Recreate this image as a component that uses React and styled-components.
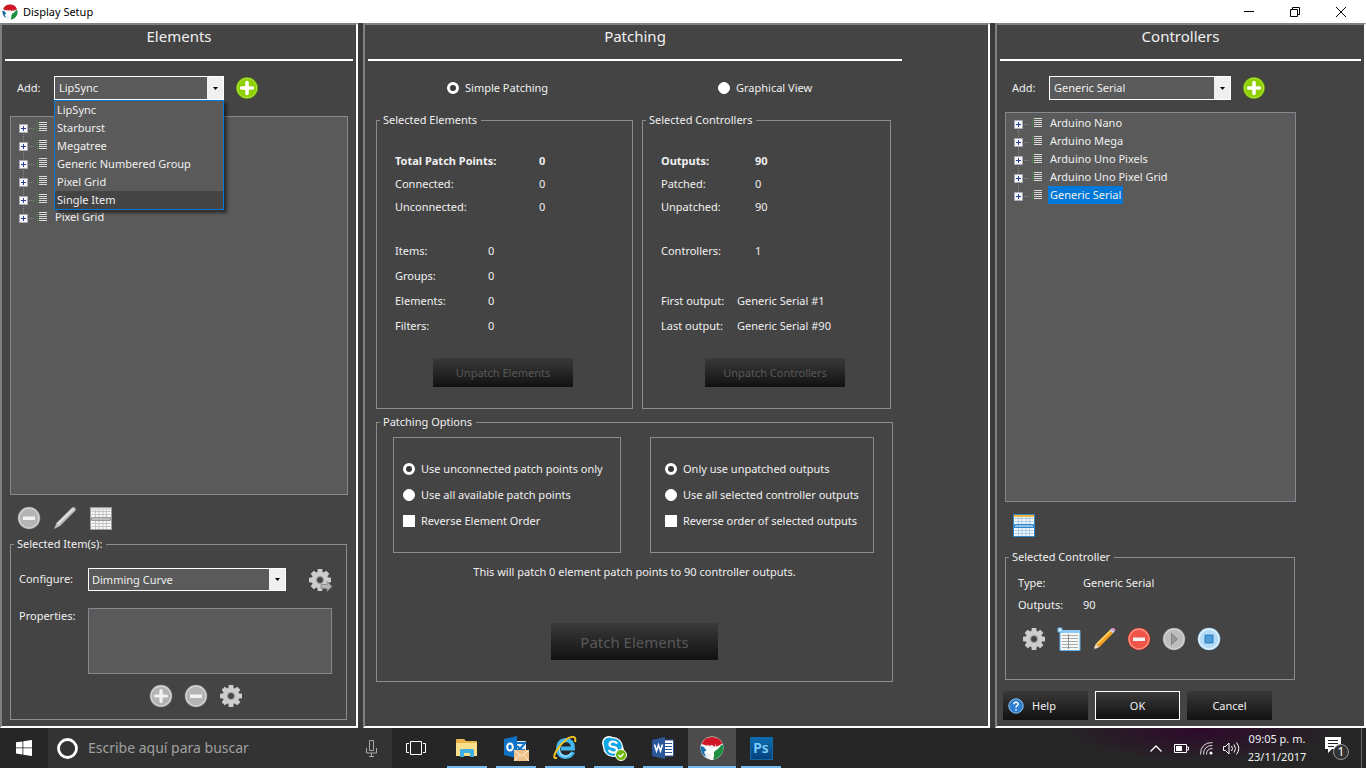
import React from 'react';
import styled, { createGlobalStyle, css } from 'styled-components';

const GlobalStyle = createGlobalStyle`
  * {
    box-sizing: border-box;
  }
  body {
    margin: 0;
    background: #3a3a3a;
    color: #f0f0f0;
    font-family: "Noto Sans", "Open Sans", sans-serif;
    font-size: 11px;
    line-height: 16px;
  }
  button, select, input {
    font: inherit;
    color: inherit;
  }
`;

const Window = styled.div`
  display: flex;
  flex-direction: column;
  min-height: 100vh;
`;

const TitleBar = styled.header`
  display: flex;
  align-items: center;
  height: 23px;
  padding: 0 2px;
  background: #fff;
  color: #000;
`;

const WindowTitle = styled.h1`
  flex: 1;
  margin: 0 0 0 5px;
  font-size: 11px;
  font-weight: 400;
`;

const CaptionButton = styled.button`
  display: grid;
  place-items: center;
  width: 46px;
  height: 22px;
  padding: 0;
  border: 0;
  background: none;
`;

const Panels = styled.main`
  flex: 1;
  display: grid;
  grid-template-columns: 358fr 627fr 371fr;
  gap: 5px;
`;

const Panel = styled.section`
  display: flex;
  flex-direction: column;
  min-width: 0;
  padding: 0 3px 6px;
  border: 2px solid;
  border-color: #808080 #fff #fff #808080;
  background: #444;
`;

const PanelTitle = styled.h2`
  height: 36px;
  margin: 0 0 15px;
  border-bottom: 2px solid #fff;
  font-size: 15px;
  font-weight: 400;
  line-height: 22px;
  text-align: center;
`;

const AddRow = styled.div`
  display: flex;
  align-items: center;
  height: 24px;
  margin-left: 12px;
`;

const AddLabel = styled.label`
  width: 37px;
`;

const ComboBox = styled.div`
  position: relative;
  width: ${(props) => props.$width};
  height: ${(props) => props.$height || '24px'};
  border: 1px solid #fff;
  background: #5a5a5a;
`;

const ComboSelect = styled.select`
  appearance: none;
  display: block;
  width: 100%;
  height: 100%;
  padding: 0 20px 0 ${(props) => props.$indent || '4px'};
  border: 0;
  outline: 0;
  background: transparent;
  option {
    background: #5a5a5a;
  }
`;

const ComboArrow = styled.span`
  position: absolute;
  top: 0;
  right: 0;
  bottom: 0;
  display: grid;
  place-items: center;
  width: 16px;
  background: #f0f0f0;
  pointer-events: none;
`;

const DropList = styled.ul`
  position: absolute;
  z-index: 2;
  top: 23px;
  left: -1px;
  right: -1px;
  margin: 0;
  padding: 0;
  border: 1px solid #0078d7;
  background: #5a5a5a;
  box-shadow: 3px 3px 3px rgba(0, 0, 0, 0.5);
  list-style: none;
`;

const DropItem = styled.li`
  height: 18px;
  padding-left: 2px;
  line-height: 18px;
  background: ${(props) => (props.$active ? '#444' : 'transparent')};
`;

const IconButton = styled.button`
  display: grid;
  place-items: center;
  width: 24px;
  height: 24px;
  padding: 0;
  border: 0;
  background: none;
`;

const AddButton = styled(IconButton)`
  margin-left: 11px;
`;

const Tree = styled.ul`
  flex: 1;
  width: ${(props) => props.$width};
  margin: ${(props) => props.$top} 0 0 5px;
  padding: 1px 0 0;
  border: 1px solid #828790;
  background: #5a5a5a;
  list-style: none;
`;

const TreeRow = styled.li`
  display: flex;
  height: 18px;
  line-height: 18px;
`;

const TreeLabel = styled.span`
  padding: 0 2px;
  background: ${(props) => (props.$selected ? '#0078d7' : 'transparent')};
`;

const ToolRow = styled.div`
  display: flex;
  gap: ${(props) => props.$gap};
  margin: ${(props) => props.$margin};
`;

const Group = styled.fieldset`
  min-width: 0;
  width: ${(props) => props.$width || 'auto'};
  margin: ${(props) => props.$margin || '0'};
  padding: 0;
  border: 1px solid #8c8c8c;
`;

const GroupTitle = styled.legend`
  margin-left: 3px;
  padding: 0 4px 0 3px;
`;

const ItemForm = styled.div`
  display: grid;
  grid-template-columns: 69px 198px 1fr;
  padding: 16px 14px 10px 8px;
`;

const ItemLabel = styled.label`
  line-height: 22px;
`;

const ConfigureButton = styled(IconButton)`
  justify-self: end;
`;

const PropertyList = styled.ul`
  grid-column: 2 / 4;
  height: 66px;
  margin: 16px 0 0;
  padding: 0;
  border: 1px solid #828790;
  background: #5a5a5a;
`;

const PropertyLabel = styled.span`
  padding-top: 16px;
`;

const PatchArea = styled.div`
  max-width: 534px;
`;

const ViewRow = styled.div`
  display: grid;
  grid-template-columns: 271px auto;
  height: 24px;
  margin-left: 79px;
`;

const Choice = styled.label`
  display: flex;
  align-items: center;
  gap: 6px;
  min-height: 24px;
`;

const Radio = styled.input.attrs({ type: 'radio' })`
  appearance: none;
  width: 12px;
  height: 12px;
  margin: 0;
  border: 1px solid #fff;
  border-radius: 50%;
  background: #fff;
  &:checked {
    border-width: 3px;
    background: #3a3a3a;
  }
`;

const CheckBox = styled.input.attrs({ type: 'checkbox' })`
  appearance: none;
  width: 12px;
  height: 12px;
  margin: 0;
  background: #fff;
`;

const GroupRow = styled.div`
  display: grid;
  grid-template-columns: 257fr 249fr;
  gap: 9px;
  margin: 12px 11px 0 8px;
`;

const Facts = styled.dl`
  display: grid;
  grid-template-columns: ${(props) => props.$label} auto;
  grid-auto-rows: ${(props) => props.$row};
  align-items: center;
  margin: ${(props) => props.$margin || '0 0 20px 18px'};
`;

const Term = styled.dt`
  font-weight: ${(props) => (props.$bold ? 700 : 400)};
  grid-row: ${(props) => props.$line || 'auto'};
`;

const Value = styled.dd`
  margin: 0 0 0 ${(props) => props.$indent || '0'};
  font-weight: ${(props) => (props.$bold ? 700 : 400)};
  grid-row: ${(props) => props.$line || 'auto'};
`;

const GroupBody = styled.div`
  padding: 21px 0;
`;

const PushButton = styled.button`
  display: flex;
  align-items: center;
  justify-content: center;
  padding: 0;
  border: 0;
  background: linear-gradient(#3a3a3a, #111);
  &:disabled {
    color: #585858;
  }
`;

const UnpatchButton = styled(PushButton)`
  width: 140px;
  height: 29px;
  margin-left: ${(props) => props.$indent};
`;

const PatchButton = styled(PushButton)`
  width: 167px;
  height: 37px;
  margin: 43px auto 21px;
  font-size: 15px;
`;

const OptionBoxes = styled.div`
  display: grid;
  grid-template-columns: 228fr 224fr;
  gap: 29px;
  padding: 7px 18px 0 16px;
`;

const OptionBox = styled.div`
  display: grid;
  gap: 2px;
  padding: 19px 0 19px ${(props) => props.$indent};
  border: 1px solid #8c8c8c;
`;

const Summary = styled.p`
  margin: 11px 0 0;
  text-align: center;
`;

const DialogButtons = styled.footer`
  display: flex;
  gap: 7px;
  margin: 11px 0 0 3px;
`;

const DialogButton = styled(PushButton)`
  width: 85px;
  height: 29px;
  border: ${(props) => (props.$primary ? '1px solid #fff' : '0')};
`;

const HelpButton = styled(DialogButton)`
  justify-content: flex-start;
  gap: 8px;
  padding-left: 5px;
`;

const TaskBar = styled.nav`
  display: flex;
  height: 40px;
  background:
    radial-gradient(ellipse 140px 34px at 1200px 0, rgba(48, 4, 44, 0.9), transparent),
    #262626;
`;

const TaskButton = styled.button`
  position: relative;
  display: grid;
  place-items: center;
  width: 48px;
  margin-right: 1px;
  padding: 0;
  border: 0;
  background: ${(props) => (props.$active ? '#4c4c4c' : 'none')};
  ${(props) =>
    props.$running &&
    css`
      &::after {
        content: '';
        position: absolute;
        bottom: 0;
        left: ${props.$active ? '0' : '4px'};
        right: ${props.$active ? '0' : '4px'};
        height: 2px;
        background: #76b9ed;
      }
    `}
`;

const StartButton = styled(TaskButton)`
  margin-right: 0;
`;

const Search = styled.label`
  display: flex;
  align-items: center;
  width: 344px;
  padding: 0 14px 0 8px;
  background: #333;
`;

const SearchInput = styled.input`
  flex: 1;
  min-width: 0;
  margin-left: 9px;
  padding: 0;
  border: 0;
  outline: 0;
  background: none;
  font-size: 14px;
  &::placeholder {
    color: #a0a0a0;
    opacity: 1;
  }
`;

const Apps = styled.div`
  display: flex;
  flex: 1;
  margin-left: 2px;
`;

const Tray = styled.div`
  display: flex;
  align-items: center;
  gap: 5px;
  padding-right: 4px;
`;

const TrayIcon = styled(IconButton)`
  width: 20px;
`;

const Clock = styled.time`
  width: 62px;
  line-height: 18px;
  text-align: center;
`;

const Notifications = styled(IconButton)`
  width: 49px;
  height: 40px;
  border-right: 1px solid #666;
`;

function DeerLogo({ size }) {
  return (
    <svg width={size} height={size} viewBox="0 0 24 24">
      <circle cx="12" cy="12" r="11.500" fill="#e9eef0" />
      <path d="M1.500 8A11.500 11.500 0 0 1 22.500 7.500L18 10l-3 1-3-2-4 1-3-1z" fill="#cf1626" />
      <path d="M22.800 8.500A11.500 11.500 0 0 1 12 23.500l2-7 1-4 4-2z" fill="#1f8f43" />
      <path d="M.8 10l3 1 3 4-2 2 1 4A11.500 11.500 0 0 1 .8 10z" fill="#1b6fa8" />
      <path d="M3 9l4 2 1-3 1 4 3 1 3-2 0-4 1 4 5-2-3 4-2 1-2 2v4l-1 4-3 1 1-6-2-2-4 1-1-2 3-2z" fill="#fff" />
    </svg>
  );
}

function PlusGreen() {
  return (
    <svg width="24" height="24" viewBox="0 0 24 24">
      <circle cx="12" cy="12" r="11" fill="#5f9a00" />
      <circle cx="12" cy="12" r="9.800" fill="#8fd000" stroke="#b9ea4a" strokeWidth="1" />
      <path d="M12 6.500v11M6.500 12h11" stroke="#fff" strokeWidth="3.600" strokeLinecap="round" />
    </svg>
  );
}

function RoundIcon({ fill = '#b4b4b4', rim = '#d2d2d2', edge = '#8c8c8c', children }) {
  return (
    <svg width="24" height="24" viewBox="0 0 24 24">
      <circle cx="12" cy="12" r="11.300" fill={edge} />
      <circle cx="12" cy="12" r="10" fill={fill} stroke={rim} strokeWidth="1.400" />
      {children}
    </svg>
  );
}

const Minus = () => <path d="M6 10.500h12v3.500H6z" fill="#f2f2f2" />;
const Plus = () => <path d="M12 6.500v11M6.500 12h11" stroke="#f2f2f2" strokeWidth="3.200" strokeLinecap="round" />;

function Gear({ arrow }) {
  return (
    <svg width="24" height="24" viewBox="0 0 24 24">
      <g fill="#cdcdcd">
        {[0, 45, 90, 135].map((angle) => (
          <path key={angle} d="M9.800 1h4.400l.6 4v14l-.6 4H9.800l-.6-4V5z" transform={`rotate(${angle} 12 12)`} />
        ))}
        <circle cx="12" cy="12" r="8.300" />
      </g>
      <circle cx="12" cy="12" r="3.500" fill="#444" stroke="#a2a2a2" strokeWidth="1" />
      {arrow && <path d="M13 16.500h6v-3l5 5-5 5v-3h-6z" fill="#b5b5b5" stroke="#7d7d7d" strokeWidth=".7" />}
    </svg>
  );
}

function GrayPen() {
  return (
    <svg width="24" height="24" viewBox="0 0 24 24">
      <path d="M1 23l2.500-6L19 1.500q2-1 3 .2t.5 2.800L7 20z" fill="#bdbdbd" />
      <path d="M4.500 18L20.500 2.800" stroke="#e2e2e2" strokeWidth="1.800" />
    </svg>
  );
}

function Pencil() {
  return (
    <svg width="24" height="24" viewBox="0 0 24 24">
      <path d="M4 16.500L17.500 3.200l3.500 3L7.500 20z" fill="#f5a11d" />
      <path d="M5 17L18.500 4" stroke="#ffd777" strokeWidth="1.500" />
      <path d="M17.500 3.200l1.500-1.400 3.500 3-1.500 1.500z" fill="#d8dde4" />
      <path d="M19 1.800q2-1.600 3.500-.3t.2 3.300z" fill="#e39bd0" />
      <path d="M4 16.500L1 23l6.500-3z" fill="#eed9b4" />
      <path d="M2 20.800L1 23l2.300-1z" fill="#333" />
    </svg>
  );
}

function GridIcon({ line, band, head, edge }) {
  return (
    <svg width="24" height="24" viewBox="0 0 24 24">
      <path d="M1 1h22v23H1z" fill={edge} />
      <path d="M2 2h20v21H2z" fill="#f4f6f8" />
      <path d="M2.500 5.500h19M2.500 8.500h19M2.500 17.500h19M2.500 20.500h19M6.500 2v21M10 2v21M14 2v21M17.500 2v21" stroke={line} strokeWidth="1" />
      <path d="M2 2h20v2H2z" fill={head} />
      <path d="M2.500 11.500h19v3h-19z" fill={band} stroke={edge} />
    </svg>
  );
}

function SheetIcon() {
  return (
    <svg width="24" height="24" viewBox="0 0 24 24">
      <path d="M3 3.500h20V23.500H3z" fill="#f7f7f3" stroke="#5fb0ec" />
      <path d="M3 3h20v3H3z" fill="#8cc9f4" />
      <path d="M5 8.500h16M5 11.500h16M5 14.500h16M5 17.500h16M5 20.500h16" stroke="#a9adb0" />
      <path d="M11.500 7v15" stroke="#8a8f92" />
      <path d="M1 1h4v4H1z" fill="#d9eefc" stroke="#6db8ee" />
    </svg>
  );
}

function TreeMarker({ first, last }) {
  return (
    <svg width="42" height="18" viewBox="0 0 42 18">
      <path
        d={`M12.500 ${first ? 10 : 0}V${last ? 10 : 18}M18 10.500h5`}
        stroke="#8a8a8a"
        strokeDasharray="1 1"
      />
      <path d="M8.500 6.500h8v8h-8z" fill="#f6f6f6" stroke="#aab" />
      <path d="M10 10.500h5M12.500 8v5" stroke="#25409c" />
      <path d="M28 4.500h8M28 6.500h8M28 8.500h8M28 10.500h8M28 12.500h8" stroke="#dadada" />
      <path d="M26.500 4v9" stroke="#3a9a3a" strokeDasharray="1 1" />
    </svg>
  );
}

function Combo({ id, width, height, indent, options, open }) {
  return (
    <ComboBox $width={width} $height={height}>
      <ComboSelect id={id} $indent={indent} defaultValue={options[0]}>
        {options.map((name) => (
          <option key={name}>{name}</option>
        ))}
      </ComboSelect>
      <ComboArrow>
        <svg width="5" height="3" viewBox="0 0 5 3">
          <path d="M0 0h5L2.500 3z" fill="#000" />
        </svg>
      </ComboArrow>
      {open && (
        <DropList>
          {options.map((name) => (
            <DropItem key={name} $active={name === 'Single Item'}>
              {name}
            </DropItem>
          ))}
        </DropList>
      )}
    </ComboBox>
  );
}

function TreeView({ items, selected, ...rest }) {
  return (
    <Tree {...rest}>
      {items.map((name, i) => (
        <TreeRow key={i}>
          <TreeMarker first={i === 0} last={i === items.length - 1} />
          <TreeLabel $selected={selected === i}>{name}</TreeLabel>
        </TreeRow>
      ))}
    </Tree>
  );
}

const elementTypes = ['LipSync', 'Starburst', 'Megatree', 'Generic Numbered Group', 'Pixel Grid', 'Single Item'];
const elementRows = ['', '', '', '', '', 'Pixel Grid'];
const controllers = ['Arduino Nano', 'Arduino Mega', 'Arduino Uno Pixels', 'Arduino Uno Pixel Grid', 'Generic Serial'];

function ElementsPanel() {
  return (
    <Panel>
      <PanelTitle>Elements</PanelTitle>
      <AddRow>
        <AddLabel htmlFor="add-element">Add:</AddLabel>
        <Combo id="add-element" width="170px" options={elementTypes} open />
        <AddButton aria-label="Add element"><PlusGreen /></AddButton>
      </AddRow>
      <TreeView $width="calc(100% - 10px)" $top="16px" items={elementRows} />
      <ToolRow $gap="12px" $margin="11px 0 6px 12px">
        <IconButton aria-label="Delete"><RoundIcon><Minus /></RoundIcon></IconButton>
        <IconButton aria-label="Rename"><GrayPen /></IconButton>
        <IconButton aria-label="Select rows"><GridIcon line="#c4c4c4" band="#bdbdbd" head="#ddd" edge="#9c9c9c" /></IconButton>
      </ToolRow>
      <Group $margin="0 6px 0 5px">
        <GroupTitle>Selected Item(s):</GroupTitle>
        <ItemForm>
          <ItemLabel htmlFor="configure">Configure:</ItemLabel>
          <Combo id="configure" width="198px" height="23px" indent="3px" options={['Dimming Curve']} />
          <ConfigureButton aria-label="Configure"><Gear arrow /></ConfigureButton>
          <PropertyLabel id="properties">Properties:</PropertyLabel>
          <PropertyList aria-labelledby="properties" />
        </ItemForm>
        <ToolRow $gap="11px" $margin="0 0 11px 138px">
          <IconButton aria-label="Add property"><RoundIcon><Plus /></RoundIcon></IconButton>
          <IconButton aria-label="Remove property"><RoundIcon><Minus /></RoundIcon></IconButton>
          <IconButton aria-label="Property settings"><Gear /></IconButton>
        </ToolRow>
      </Group>
    </Panel>
  );
}

function PatchingPanel() {
  return (
    <Panel>
      <PatchArea>
        <PanelTitle>Patching</PanelTitle>
        <ViewRow>
          <Choice><Radio name="view" defaultChecked />Simple Patching</Choice>
          <Choice><Radio name="view" />Graphical View</Choice>
        </ViewRow>
        <GroupRow>
          <Group>
            <GroupTitle>Selected Elements</GroupTitle>
            <GroupBody>
              <Facts $label="144px" $row="23px">
                <Term $bold>Total Patch Points:</Term>
                <Value $bold>0</Value>
                <Term>Connected:</Term>
                <Value>0</Value>
                <Term>Unconnected:</Term>
                <Value>0</Value>
              </Facts>
              <Facts $label="93px" $row="25px">
                <Term>Items:</Term>
                <Value>0</Value>
                <Term>Groups:</Term>
                <Value>0</Value>
                <Term>Elements:</Term>
                <Value>0</Value>
                <Term>Filters:</Term>
                <Value>0</Value>
              </Facts>
              <UnpatchButton $indent="56px" disabled>Unpatch Elements</UnpatchButton>
            </GroupBody>
          </Group>
          <Group>
            <GroupTitle>Selected Controllers</GroupTitle>
            <GroupBody>
              <Facts $label="94px" $row="23px">
                <Term $bold>Outputs:</Term>
                <Value $bold>90</Value>
                <Term>Patched:</Term>
                <Value>0</Value>
                <Term>Unpatched:</Term>
                <Value>90</Value>
              </Facts>
              <Facts $label="76px" $row="25px">
                <Term>Controllers:</Term>
                <Value $indent="18px">1</Value>
                <Term $line="3">First output:</Term>
                <Value $line="3">Generic Serial #1</Value>
                <Term $line="4">Last output:</Term>
                <Value $line="4">Generic Serial #90</Value>
              </Facts>
              <UnpatchButton $indent="62px" disabled>Unpatch Controllers</UnpatchButton>
            </GroupBody>
          </Group>
        </GroupRow>
        <Group $margin="5px 9px 0 8px">
          <GroupTitle>Patching Options</GroupTitle>
          <OptionBoxes>
            <OptionBox $indent="9px">
              <Choice><Radio name="points" defaultChecked />Use unconnected patch points only</Choice>
              <Choice><Radio name="points" />Use all available patch points</Choice>
              <Choice><CheckBox />Reverse Element Order</Choice>
            </OptionBox>
            <OptionBox $indent="14px">
              <Choice><Radio name="outputs" defaultChecked />Only use unpatched outputs</Choice>
              <Choice><Radio name="outputs" />Use all selected controller outputs</Choice>
              <Choice><CheckBox />Reverse order of selected outputs</Choice>
            </OptionBox>
          </OptionBoxes>
          <Summary>This will patch 0 element patch points to 90 controller outputs.</Summary>
          <PatchButton disabled>Patch Elements</PatchButton>
        </Group>
      </PatchArea>
    </Panel>
  );
}

function ControllersPanel() {
  return (
    <Panel>
      <PanelTitle>Controllers</PanelTitle>
      <AddRow>
        <AddLabel htmlFor="add-controller">Add:</AddLabel>
        <Combo id="add-controller" width="182px" options={['Generic Serial']} />
        <AddButton aria-label="Add controller"><PlusGreen /></AddButton>
      </AddRow>
      <TreeView $width="291px" $top="12px" items={controllers} selected={4} />
      <ToolRow $margin="11px 0 12px 12px">
        <IconButton aria-label="Select rows"><GridIcon line="#a9cdea" band="#8fc0ea" head="#f6b73c" edge="#2f86c8" /></IconButton>
      </ToolRow>
      <Group $width="290px" $margin="0 0 0 5px">
        <GroupTitle>Selected Controller</GroupTitle>
        <Facts $label="65px" $row="22px" $margin="7px 0 11px 12px">
          <Term>Type:</Term>
          <Value>Generic Serial</Value>
          <Term>Outputs:</Term>
          <Value>90</Value>
        </Facts>
        <ToolRow $gap="11px" $margin="0 0 28px 16px">
          <IconButton aria-label="Configure controller"><Gear /></IconButton>
          <IconButton aria-label="Channels"><SheetIcon /></IconButton>
          <IconButton aria-label="Rename controller"><Pencil /></IconButton>
          <IconButton aria-label="Delete controller">
            <RoundIcon fill="#ee5548" rim="#ff9484" edge="#b52418"><Minus /></RoundIcon>
          </IconButton>
          <IconButton aria-label="Start">
            <RoundIcon fill="#bdbdbd"><path d="M9.500 6.500l6 5.500-6 5.500z" fill="#999" stroke="#858585" /></RoundIcon>
          </IconButton>
          <IconButton aria-label="Stop">
            <RoundIcon fill="#b4dcf8" rim="#e2f3ff" edge="#8cc4ec">
              <path d="M8 8h8v8H8z" fill="#4c9cd8" stroke="#2e7cbc" />
            </RoundIcon>
          </IconButton>
        </ToolRow>
      </Group>
      <DialogButtons>
        <HelpButton>
          <svg width="16" height="16" viewBox="0 0 16 16">
            <circle cx="8" cy="8" r="7.200" fill="#2f7fd0" stroke="#8fc4f2" />
            <path d="M5.800 6.200q.2-2 2.200-2t2.200 1.800q0 1.200-1.300 1.900-.9.500-.9 1.500M8 11v1.600" fill="none" stroke="#fff" strokeWidth="1.500" />
          </svg>
          Help
        </HelpButton>
        <DialogButton $primary>OK</DialogButton>
        <DialogButton>Cancel</DialogButton>
      </DialogButtons>
    </Panel>
  );
}

function FolderIcon() {
  return (
    <svg width="22" height="20" viewBox="0 0 22 20">
      <path d="M0 2q0-1 1-1h7l2 2h10q1 0 1 1v14H0z" fill="#e8b64c" />
      <path d="M0 5h21v13H0z" fill="#fbe08c" />
      <path d="M4 19v-7q0-1 1-1h12q1 0 1 1v7h-4v-4H8v4z" fill="#3fb0e6" />
    </svg>
  );
}

function OutlookIcon() {
  return (
    <svg width="26" height="26" viewBox="0 0 26 26">
      <path d="M12 6h11v12H12z" fill="#e6f1fa" />
      <path d="M13 8h9M13 15h9" stroke="#0f72c4" strokeWidth="2" />
      <path d="M14 11l3 3 6-7" fill="none" stroke="#0f72c4" strokeWidth="2" />
      <path d="M1 4l13-3v22L1 20z" fill="#0f72c4" />
      <ellipse cx="7" cy="12" rx="2.800" ry="3.600" fill="none" stroke="#fff" strokeWidth="2" />
      <path d="M11 15h15v11H11z" fill="#efc08a" />
      <path d="M11 15l7.500 6 7.500-6M11 26l5.500-6M26 26l-5.500-6" fill="none" stroke="#fff1dc" />
    </svg>
  );
}

function ExplorerIcon() {
  return (
    <svg width="24" height="24" viewBox="0 0 24 24">
      <path d="M20 16q-2 5-8 5-7-1-7-8.500T12.500 4Q20 4 20 12.500H8" fill="none" stroke="#42b7ee" strokeWidth="4" />
      <path d="M18 17q-2 3.500-6 3.500-5.500-1-5.500-7T12.500 5" fill="none" stroke="#b5e6fb" strokeWidth="1.200" />
      <path d="M4 22Q-1 23 3 15.500T15.500 2Q24-1.500 22 6" fill="none" stroke="#f2c326" strokeWidth="2" />
    </svg>
  );
}

function SkypeIcon() {
  return (
    <svg width="26" height="26" viewBox="0 0 26 26">
      <circle cx="8" cy="8" r="7" fill="#fff" />
      <circle cx="16" cy="15" r="7" fill="#fff" />
      <circle cx="12" cy="12" r="10" fill="#fff" />
      <circle cx="8" cy="8" r="5.500" fill="#12a5e4" />
      <circle cx="12" cy="12" r="8.700" fill="#12a5e4" />
      <path d="M16 8.800Q15 6.500 12 6.500T8.500 9t3.500 2.800T15.800 15 12 17.500 8 15" fill="none" stroke="#fff" strokeWidth="2.200" />
      <circle cx="20" cy="20" r="5.500" fill="#6bb700" stroke="#fff" />
      <path d="M17.500 20l2 2 3-3.500" fill="none" stroke="#fff" strokeWidth="1.400" />
    </svg>
  );
}

function WordIcon() {
  return (
    <svg width="24" height="22" viewBox="0 0 24 22">
      <path d="M12 3h10.500v16H12z" fill="#fff" stroke="#2b579a" />
      <path d="M14 6.500h7M14 9.500h7M14 12.500h7M14 15.500h7" stroke="#2b579a" />
      <path d="M1 3l13-3v22L1 19z" fill="#2b579a" />
      <path d="M3.500 7.500L5.500 14l2-6 2 6 2-6.500" fill="none" stroke="#fff" strokeWidth="1.600" />
    </svg>
  );
}

const PhotoshopIcon = styled.span`
  display: grid;
  place-items: center;
  width: 23px;
  height: 23px;
  border: 1px solid #0e68a8;
  background: linear-gradient(#0c6cb0, #06427c);
  color: #7fd2ff;
  font-size: 14px;
  font-weight: 600;
`;

function Taskbar() {
  return (
    <TaskBar>
      <StartButton aria-label="Start">
        <svg width="16" height="16" viewBox="0 0 16 16">
          <path d="M0 2.300l6.500-.9v6.100H0zM7.300 1.300L16 0v7.500H7.300zM0 8.300h6.500v6.200L0 13.600zM7.300 8.300H16V16l-8.700-1.300z" fill="#fff" />
        </svg>
      </StartButton>
      <Search>
        <svg width="23" height="23" viewBox="0 0 23 23">
          <circle cx="11.500" cy="11.500" r="9" fill="none" stroke="#fff" strokeWidth="2.800" />
        </svg>
        <SearchInput aria-label="Buscar" placeholder="Escribe aquí para buscar" />
        <svg width="13" height="17" viewBox="0 0 13 17" fill="none" stroke="#aaa">
          <path d="M4.500.5h4v10h-4zM1.500 8v5h10V8M6.500 13v3M4 16.500h5" />
        </svg>
      </Search>
      <TaskButton aria-label="Task view">
        <svg width="20" height="14" viewBox="0 0 20 14" fill="none" stroke="#fff">
          <path d="M4.500.5h11v13h-11zM3 2.500H.5v9H3M17 2.500h2.500v9H17" />
        </svg>
      </TaskButton>
      <Apps>
        <TaskButton $running aria-label="Files"><FolderIcon /></TaskButton>
        <TaskButton $running aria-label="Outlook"><OutlookIcon /></TaskButton>
        <TaskButton $running aria-label="Internet Explorer"><ExplorerIcon /></TaskButton>
        <TaskButton $running aria-label="Skype"><SkypeIcon /></TaskButton>
        <TaskButton $running aria-label="Word"><WordIcon /></TaskButton>
        <TaskButton $running $active aria-label="Display Setup"><DeerLogo size={24} /></TaskButton>
        <TaskButton $running aria-label="Photoshop"><PhotoshopIcon>Ps</PhotoshopIcon></TaskButton>
      </Apps>
      <Tray>
        <TrayIcon aria-label="Show hidden icons">
          <svg width="12" height="7" viewBox="0 0 12 7" fill="none" stroke="#fff" strokeWidth="1.300"><path d="M.5 6.500L6 1l5.500 5.500" /></svg>
        </TrayIcon>
        <TrayIcon aria-label="Battery">
          <svg width="15" height="9" viewBox="0 0 15 9"><path d="M.5.5h12v8H.5zM13 3h1.500v3H13" fill="none" stroke="#fff" /><path d="M2 2h6v5H2z" fill="#fff" /></svg>
        </TrayIcon>
        <TrayIcon aria-label="Network">
          <svg width="13" height="13" viewBox="0 0 13 13" fill="none" stroke="#ddd">
            <path d="M.5 12.500Q.5.500 12.500.5M3.500 12.500q0-9 9-9M6.500 12.500q0-6 6-6" />
            <circle cx="11" cy="11" r="1.500" fill="#fff" stroke="none" />
          </svg>
        </TrayIcon>
        <TrayIcon aria-label="Volume">
          <svg width="17" height="13" viewBox="0 0 17 13" fill="none" stroke="#fff">
            <path d="M.5 4.500h2l3.500-3.500v11L2.500 8.500h-2zM8.500 4q2 2.500 0 5M11 2.500q3 4 0 8M13.500.5q4.500 6 0 12" />
          </svg>
        </TrayIcon>
        <Clock>09:05 p. m.<br />23/11/2017</Clock>
        <Notifications aria-label="Notifications">
          <svg width="26" height="26" viewBox="0 0 26 26">
            <path d="M1 2h16v12H8l-4 4v-4H1z" fill="#fff" />
            <path d="M4 5.500h10M4 8.500h10M4 11.500h6" stroke="#222" />
            <circle cx="17" cy="17" r="7.500" fill="#333" stroke="#999" />
            <text x="17" y="21" fill="#fff" fontSize="12" textAnchor="middle">1</text>
          </svg>
        </Notifications>
      </Tray>
    </TaskBar>
  );
}

function App() {
  return (
    <Window>
      <GlobalStyle />
      <TitleBar>
        <DeerLogo size={16} />
        <WindowTitle>Display Setup</WindowTitle>
        <CaptionButton aria-label="Minimize">
          <svg width="10" height="10" viewBox="0 0 10 10"><path d="M0 4.500h10" stroke="#000" /></svg>
        </CaptionButton>
        <CaptionButton aria-label="Restore">
          <svg width="10" height="10" viewBox="0 0 10 10" fill="none" stroke="#000"><path d="M.5 2.500h7v7h-7zM2.500 2V.5h7v7H8" /></svg>
        </CaptionButton>
        <CaptionButton aria-label="Close">
          <svg width="10" height="10" viewBox="0 0 10 10"><path d="M0 0l10 10M10 0L0 10" stroke="#000" /></svg>
        </CaptionButton>
      </TitleBar>
      <Panels>
        <ElementsPanel />
        <PatchingPanel />
        <ControllersPanel />
      </Panels>
      <Taskbar />
    </Window>
  );
}

export default App;
